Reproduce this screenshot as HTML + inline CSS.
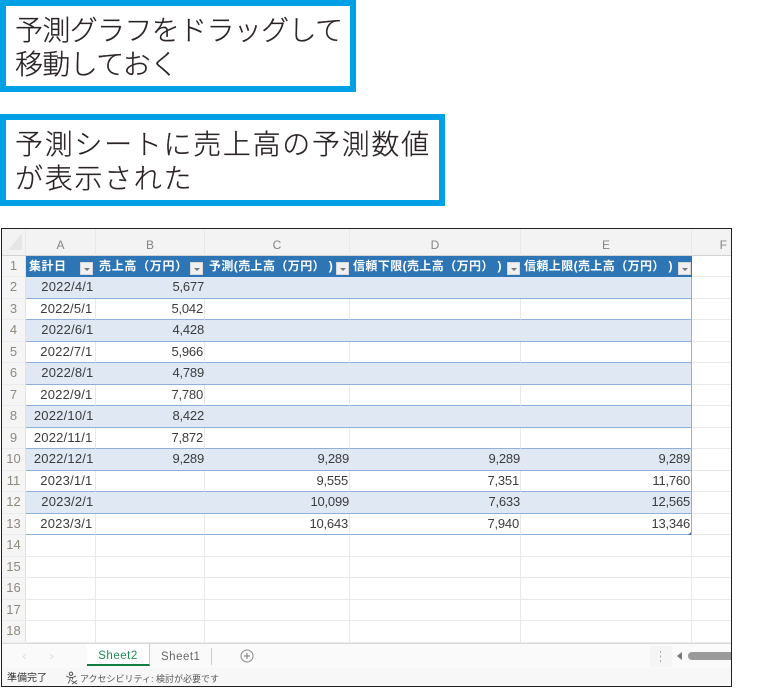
<!DOCTYPE html>
<html lang="ja"><head><meta charset="utf-8"><style>
html,body{margin:0;padding:0;background:#fff}
body{width:783px;height:688px;position:relative;overflow:hidden;font-family:"Liberation Sans","Noto Sans CJK JP",sans-serif;text-spacing-trim:space-all}
.box{position:absolute;left:0;box-sizing:border-box;border:6px solid #00a0e4;height:92px;background:#fff}
.box div{position:absolute;left:9px;white-space:nowrap;font-family:"Noto Sans CJK JP",sans-serif;font-size:28px;line-height:34px;color:#2a2324;font-weight:300;-webkit-text-stroke:.25px #2a2324}
table{position:absolute;left:2px;top:229px;border-collapse:separate;border-spacing:0;table-layout:fixed;width:730px;font-size:13px;color:#3c3c3c}
td{box-sizing:border-box;padding:0 1px 0 0;text-align:right;white-space:nowrap;overflow:hidden;border-right:1px solid #e8e8e8;border-bottom:1px solid #e8e8e8;line-height:18px;letter-spacing:-.2px}
td.a{padding-right:2.5px;letter-spacing:.2px}
tr.p td{padding-bottom:1px}
td.r{background:#f5f5f5;color:#8f897c;text-align:center;padding-left:0;padding-right:0;border-right:1px solid #e2e2e2;border-bottom:1px solid #ececec;font-size:13px;letter-spacing:0}
tr.c td{background:#f3f3f3;color:#858585;text-align:center;font-size:12px;padding:5px 0 0;border-bottom:1px solid #d2d2d2;border-right:1px solid #e8e8e8;height:27px;letter-spacing:0}
tr.h td.d{background:#2e75b6;border:0}
tr.d td.d{border-bottom:1px solid #8eb0dc}
tr.b td.d{background:#dfe8f3;border-right:0}
tr.d td.e{border-right:1px solid #8eb0dc}
tr.b td.e{border-right:1px solid #8eb0dc}
.t{position:absolute;top:259px;color:#fff;font-size:12px;font-weight:700;line-height:15px;white-space:nowrap;letter-spacing:.4px;font-family:"Liberation Sans","Noto Sans CJK JP",sans-serif}
.f{position:absolute;top:262px;width:13px;height:13px;background:#f0f0f0;border:1px solid #d8d8d8;box-sizing:border-box}
.f:after{content:"";position:absolute;left:3px;top:5px;border:3px solid transparent;border-top:3px solid #777;border-bottom:0}
.abs{position:absolute;white-space:nowrap}
</style></head><body>
<div class="box" style="top:0;width:356px"><div style="top:6px;letter-spacing:-.65px">予測グラフをドラッグして</div><div style="top:40px;letter-spacing:-.65px">移動しておく</div></div>
<div class="box" style="top:114px;width:445px"><div style="top:6px;letter-spacing:1.7px">予測シートに売上高の予測数値</div><div style="top:40px;letter-spacing:1.7px">が表示された</div></div>

<table><colgroup><col style="width:24px"><col style="width:70px"><col style="width:109px"><col style="width:145px"><col style="width:171px"><col style="width:171px"><col style="width:40px"></colgroup>
<tr class="c"><td></td><td>A</td><td>B</td><td>C</td><td>D</td><td>E</td><td style="text-align:right;padding-right:4px">F</td></tr>
<tr class="h" style="height:21px"><td class="r">1</td><td class="d"></td><td class="d"></td><td class="d"></td><td class="d"></td><td class="d"></td><td></td></tr>
<tr class="d b p" style="height:22px"><td class="r">2</td><td class="d a">2022/4/1</td><td class="d">5,677</td><td class="d"></td><td class="d"></td><td class="d e"></td><td></td></tr>
<tr class="d" style="height:21px"><td class="r">3</td><td class="d a">2022/5/1</td><td class="d">5,042</td><td class="d"></td><td class="d"></td><td class="d e"></td><td></td></tr>
<tr class="d b p" style="height:22px"><td class="r">4</td><td class="d a">2022/6/1</td><td class="d">4,428</td><td class="d"></td><td class="d"></td><td class="d e"></td><td></td></tr>
<tr class="d" style="height:21px"><td class="r">5</td><td class="d a">2022/7/1</td><td class="d">5,966</td><td class="d"></td><td class="d"></td><td class="d e"></td><td></td></tr>
<tr class="d b p" style="height:22px"><td class="r">6</td><td class="d a">2022/8/1</td><td class="d">4,789</td><td class="d"></td><td class="d"></td><td class="d e"></td><td></td></tr>
<tr class="d" style="height:21px"><td class="r">7</td><td class="d a">2022/9/1</td><td class="d">7,780</td><td class="d"></td><td class="d"></td><td class="d e"></td><td></td></tr>
<tr class="d b p" style="height:22px"><td class="r">8</td><td class="d a">2022/10/1</td><td class="d">8,422</td><td class="d"></td><td class="d"></td><td class="d e"></td><td></td></tr>
<tr class="d" style="height:21px"><td class="r">9</td><td class="d a">2022/11/1</td><td class="d">7,872</td><td class="d"></td><td class="d"></td><td class="d e"></td><td></td></tr>
<tr class="d b p" style="height:22px"><td class="r">10</td><td class="d a">2022/12/1</td><td class="d">9,289</td><td class="d">9,289</td><td class="d">9,289</td><td class="d e">9,289</td><td></td></tr>
<tr class="d" style="height:21px"><td class="r">11</td><td class="d a">2023/1/1</td><td class="d"></td><td class="d">9,555</td><td class="d">7,351</td><td class="d e">11,760</td><td></td></tr>
<tr class="d b p" style="height:22px"><td class="r">12</td><td class="d a">2023/2/1</td><td class="d"></td><td class="d">10,099</td><td class="d">7,633</td><td class="d e">12,565</td><td></td></tr>
<tr class="d" style="height:21px"><td class="r">13</td><td class="d a">2023/3/1</td><td class="d"></td><td class="d">10,643</td><td class="d">7,940</td><td class="d e">13,346</td><td></td></tr>
<tr class="p" style="height:22px"><td class="r">14</td><td></td><td></td><td></td><td></td><td></td><td></td></tr>
<tr style="height:21px"><td class="r">15</td><td></td><td></td><td></td><td></td><td></td><td></td></tr>
<tr class="p" style="height:22px"><td class="r">16</td><td></td><td></td><td></td><td></td><td></td><td></td></tr>
<tr style="height:21px"><td class="r">17</td><td></td><td></td><td></td><td></td><td></td><td></td></tr>
<tr class="p" style="height:22px"><td class="r">18</td><td></td><td></td><td></td><td></td><td></td><td></td></tr>
</table>

<svg class="abs" style="left:8px;top:233px" width="15" height="18"><path d="M14 0V17H0Z" fill="#e6e6e6"/></svg>

<div class="t" style="left:29px;letter-spacing:.5px">集計日</div><div class="f" style="left:80px"></div>
<div class="t" style="left:99px;letter-spacing:.7px">売上高（万円）</div><div class="f" style="left:190px"></div>
<div class="t" style="left:209px">予測(売上高（万円）&nbsp;)</div><div class="f" style="left:336px"></div>
<div class="t" style="left:353px">信頼下限(売上高（万円）&nbsp;)</div><div class="f" style="left:507px"></div>
<div class="t" style="left:524px">信頼上限(売上高（万円）&nbsp;)</div><div class="f" style="left:678px"></div>
<svg class="abs" style="left:688px;top:532px" width="4" height="4"><path d="M0 3H3V0Z" fill="#4472c4"/></svg>

<div class="abs" style="left:1px;top:643px;width:730px;height:25px;background:#fafafa;border-top:1px solid #dcdcdc;box-sizing:border-box"></div>
<div class="abs" style="left:1px;top:668px;width:730px;height:19px;background:#f7f7f7"></div>
<div class="abs" style="left:87px;top:644px;width:63px;height:22px;background:#fff;box-sizing:border-box;border-bottom:2px solid #107c41;border-right:1px solid #ccc;text-align:center;color:#1e8a55;font-size:11.5px;line-height:25px;letter-spacing:.5px">Sheet2</div>
<div class="abs" style="left:161px;top:650px;color:#666;font-size:11.5px;line-height:14px;letter-spacing:.5px">Sheet1</div>
<div class="abs" style="left:211px;top:648px;width:1px;height:17px;background:#ccc"></div>
<svg class="abs" style="left:20px;top:652px" width="36" height="9"><path d="M6 2L3 4.5L6 7" fill="none" stroke="#ddd"/><path d="M30 2L33 4.5L30 7" fill="none" stroke="#ddd"/></svg>
<svg class="abs" style="left:239px;top:648px" width="16" height="16"><circle cx="8" cy="8" r="6" fill="none" stroke="#888"/><path d="M5 8H11M8 5V11" stroke="#777"/></svg>
<div class="abs" style="left:650px;top:646px;width:22px;height:21px;background:#f5f5f5"></div>
<svg class="abs" style="left:659px;top:651px" width="4" height="11"><path d="M1.5 0V2M1.5 4.5V6.5M1.5 9V11" stroke="#aaa"/></svg>
<svg class="abs" style="left:677px;top:652px" width="6" height="8"><path d="M5 0V8L0 4Z" fill="#777"/></svg>
<div class="abs" style="left:688px;top:652px;width:44px;height:8px;background:#9a9a9a;border-radius:4px 0 0 4px"></div>
<div class="abs" style="left:7px;top:672px;font-size:10px;line-height:14px;color:#333">準備完了</div>
<svg class="abs" style="left:65px;top:671px" width="13" height="14"><circle cx="6" cy="2.800" r="1.700" fill="none" stroke="#555"/><path d="M1 5L5 6.500H7.500L11 5M5 6.500V9L3 12.500M7.500 6.500V8.500M6 9.500L12 13M12 9.500L7 13" fill="none" stroke="#555" stroke-width=".9"/></svg>
<div class="abs" style="left:80px;top:672px;font-size:9px;line-height:14px;color:#555">アクセシビリティ: 検討が必要です</div>

<div class="abs" style="left:1px;top:228px;width:731px;height:459px;box-sizing:border-box;border:1.500px solid #231f20"></div>
</body></html>
